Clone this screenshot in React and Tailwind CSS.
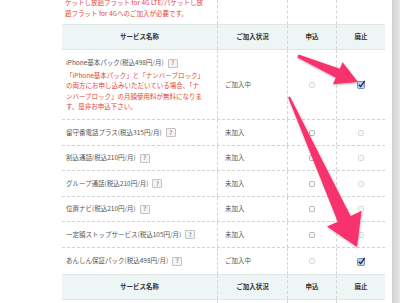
import React from "react";

const FONT = { fontFamily: '"Noto Sans CJK JP", "Noto Sans", sans-serif' };

function arrowPoints(T, P, headLen, headHalf, baseHalf, tailHalf) {
  const dx = P[0] - T[0];
  const dy = P[1] - T[1];
  const L = Math.hypot(dx, dy);
  const u = [dx / L, dy / L];
  const n = [-u[1], u[0]];
  const B = [P[0] - headLen * u[0], P[1] - headLen * u[1]];
  const pt = (c, k) => [c[0] + k * n[0], c[1] + k * n[1]];
  const pts = [
    pt(T, -tailHalf),
    pt(B, -baseHalf),
    pt(B, -headHalf),
    P,
    pt(B, headHalf),
    pt(B, baseHalf),
    pt(T, tailHalf),
  ];
  return pts.map((p) => `${p[0].toFixed(1)},${p[1].toFixed(1)}`).join(" ");
}

function Box({ state }) {
  if (state === "checked") {
    return (
      <svg width="9" height="9" viewBox="0 0 9 9" className="block">
        <rect x="0.5" y="1.5" width="7" height="7" rx="1" fill="#bcd2ef" stroke="#5f7ca6" strokeWidth="0.8" />
        <path d="M1.8 4.8 L3.6 6.6 L7.8 0.8" fill="none" stroke="#15204a" strokeWidth="1.3" />
      </svg>
    );
  }
  const cls =
    state === "on"
      ? "w-[6px] h-[6px] rounded-[1.5px] border border-[#b4b4b4] bg-[#fafafa]"
      : "w-[6px] h-[6px] rounded-[1.5px] border border-[#dadada] bg-[#f7f7f7]";
  return <div className={cls} />;
}

function Q() {
  return (
    <span className="inline-flex items-center justify-center w-[10px] h-[9px] ml-[4px] border border-[#c4c4c4] bg-[#f4f4f4] rounded-[1px] text-[6px] leading-none text-[#555]">
      ?
    </span>
  );
}

const C1 = "w-[156px] shrink-0 border-r border-dashed border-[#d4d4d4]";
const C2 = "w-[70px] shrink-0 border-r border-dashed border-[#d4d4d4]";
const C3 = "w-[49px] shrink-0 border-r border-dashed border-[#d4d4d4]";
const C4 = "w-[48px] shrink-0";

function Header() {
  return (
    <div className="flex h-[26px] bg-[#eef5f5] border-y border-[#dfe6e6] text-[6.5px] text-[#333] font-bold">
      <div className={C1 + " flex items-center justify-center"}>サービス名称</div>
      <div className={C2 + " flex items-center justify-center"}>ご加入状況</div>
      <div className={C3 + " flex items-center justify-center"}>申込</div>
      <div className={C4 + " flex items-center justify-center"}>廃止</div>
    </div>
  );
}

const rows = [
  { name: "留守番電話プラス(税込315円/月)", status: "未加入", h: "h-[26px]", a: "on", c: "off", b: true },
  { name: "割込通話(税込210円/月)", status: "未加入", h: "h-[25px]", a: "on", c: "off", b: true },
  { name: "グループ通話(税込210円/月)", status: "未加入", h: "h-[26px]", a: "on", c: "off", b: true },
  { name: "位置ナビ(税込210円/月)", status: "未加入", h: "h-[25px]", a: "on", c: "off", b: true },
  { name: "一定額ストップサービス(税込105円/月)", status: "未加入", h: "h-[26px]", a: "on", c: "off", b: true },
  { name: "あんしん保証パック(税込498円/月)", status: "ご加入中", h: "h-[26px]", a: "off", c: "checked", b: false },
];

export default function App() {
  const a1 = arrowPoints([298, 56], [358, 82], 22, 12, 5, 1.5);
  const a2 = arrowPoints([289, 97], [357, 247], 31, 19, 7, 1);
  return (
    <div className="relative w-[400px] h-[303px] overflow-hidden bg-white" style={FONT}>
      <div className="flex h-full">
        <div className="w-[62px] shrink-0" />
        <div className="w-[323px] shrink-0 flex flex-col text-[6.5px] text-[#555]">
          {/* top partial row */}
          <div className="flex h-[24px] shrink-0">
            <div className={C1 + " overflow-hidden"}>
              <div className="mt-[-3px] pl-[3px] leading-[10.5px] text-[#e2463b] whitespace-nowrap">
                ケットし放題フラット for 4G LTE/パケットし放
                <br />
                題フラット for 4Gへのご加入が必要です。
              </div>
            </div>
            <div className={C2} />
            <div className={C3} />
            <div className={C4} />
          </div>
          <Header />
          {/* iPhone row */}
          <div className="flex h-[70px] shrink-0 border-b border-dashed border-[#d4d4d4]">
            <div className={C1 + " pl-[4px] pt-[8px]"}>
              <div className="flex items-center h-[10px] whitespace-nowrap">
                iPhone基本パック(税込498円/月)
                <Q />
              </div>
              <div className="mt-[2px] leading-[10.3px] text-[#e2463b] whitespace-nowrap">
                「iPhone基本パック」と「ナンバーブロック」
                <br />
                の両方にお申し込みいただいている場合、「ナ
                <br />
                ンバーブロック」の月額使用料が無料になりま
                <br />
                す。是非お申込下さい。
              </div>
            </div>
            <div className={C2 + " flex items-center pl-[7px]"}>ご加入中</div>
            <div className={C3 + " flex items-center justify-center"}>
              <Box state="off" />
            </div>
            <div className={C4 + " flex items-center justify-center"}>
              <Box state="checked" />
            </div>
          </div>
          {rows.map((r) => (
            <div
              key={r.name}
              className={
                "flex shrink-0 " + r.h + (r.b ? " border-b border-dashed border-[#d4d4d4]" : "")
              }
            >
              <div className={C1 + " flex items-center pl-[4px] whitespace-nowrap"}>
                {r.name}
                <Q />
              </div>
              <div className={C2 + " flex items-center pl-[7px]"}>{r.status}</div>
              <div className={C3 + " flex items-center justify-center"}>
                <Box state={r.a} />
              </div>
              <div className={C4 + " flex items-center justify-center"}>
                <Box state={r.c} />
              </div>
            </div>
          ))}
          <Header />
          <div className="flex flex-1">
            <div className={C1} />
            <div className={C2} />
            <div className={C3} />
            <div className={C4} />
          </div>
        </div>
        <div className="w-[7px] shrink-0" />
        <div className="w-[8px] shrink-0 bg-gradient-to-r from-[#d2d2d2] to-[#e8e8e8]" />
      </div>
      <svg className="absolute inset-0" width="400" height="303" viewBox="0 0 400 303">
        <defs>
          <filter id="sh" x="-20%" y="-20%" width="140%" height="140%">
            <feDropShadow dx="0.5" dy="1" stdDeviation="1" floodColor="#000" floodOpacity="0.3" />
          </filter>
        </defs>
        <polygon points={a1} fill="#f8306c" filter="url(#sh)" />
        <polygon points={a2} fill="#f8306c" filter="url(#sh)" />
      </svg>
    </div>
  );
}
